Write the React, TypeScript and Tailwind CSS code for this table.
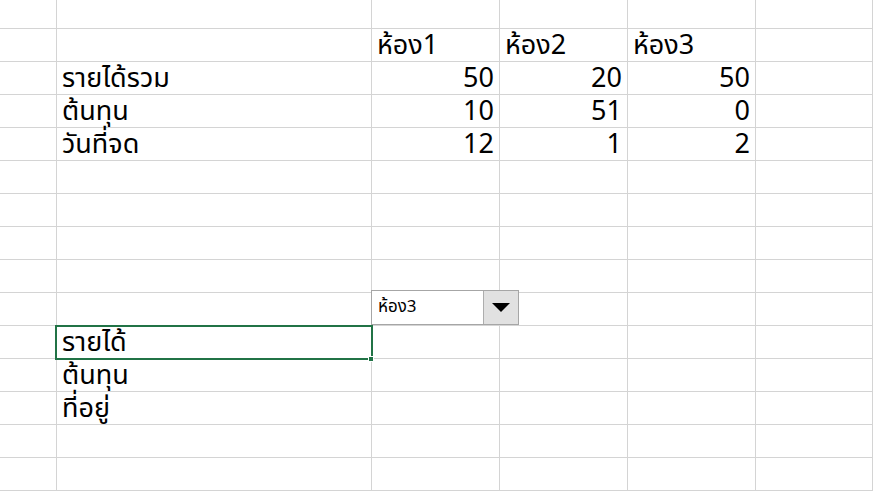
const colWidths = ["w-[57px]", "w-[315px]", "w-[128px]", "w-[128px]", "w-[128px]", "flex-1"];

type Cell = { text?: string; align?: "left" | "right" };

const rows: Cell[][] = [
  [],
  [{}, {}, { text: "ห้อง1" }, { text: "ห้อง2" }, { text: "ห้อง3" }],
  [{}, { text: "รายได้รวม" }, { text: "50", align: "right" }, { text: "20", align: "right" }, { text: "50", align: "right" }],
  [{}, { text: "ต้นทุน" }, { text: "10", align: "right" }, { text: "51", align: "right" }, { text: "0", align: "right" }],
  [{}, { text: "วันที่จด" }, { text: "12", align: "right" }, { text: "1", align: "right" }, { text: "2", align: "right" }],
  [],
  [],
  [],
  [],
  [],
  [{}, { text: "รายได้" }],
  [{}, { text: "ต้นทุน" }],
  [{}, { text: "ที่อยู่" }],
  [],
  [],
];

function Row({ cells, first }: { cells: Cell[]; first?: boolean }) {
  return (
    <div className={`flex border-b border-[#d4d4d4] ${first ? "h-[30px]" : "h-[33px]"}`}>
      {colWidths.map((w, i) => {
        const c = cells[i] || {};
        return (
          <div
            key={i}
            className={`${w} shrink-0 border-r border-[#d4d4d4] px-[5px] flex items-end text-[27px] leading-[30px] text-black whitespace-nowrap ${
              c.align === "right" ? "justify-end" : "justify-start"
            }`}
          >
            {c.text}
          </div>
        );
      })}
    </div>
  );
}

export default function App() {
  return (
    <div
      className="relative w-[873px] h-[491px] overflow-hidden bg-white"
      style={{ fontFamily: '"Noto Sans Thai", "Noto Sans", Tahoma, sans-serif' }}
    >
      <div className="-mt-[1px]">
        {rows.map((r, i) => (
          <Row key={i} cells={r} first={i === 0} />
        ))}
      </div>

      {/* dropdown form control */}
      <div className="absolute left-[371px] top-[290px] w-[148px] h-[35px] flex bg-white border border-[#a6a6a6]">
        <div className="flex-1 flex items-center pl-[6px] text-[17px] text-black">ห้อง3</div>
        <div className="w-[35px] h-full bg-[#e1e1e1] border-l border-[#adadad] flex items-center justify-center">
          <svg width="18" height="10" viewBox="0 0 18 10">
            <polygon points="0,0 18,0 9,9" fill="#000" />
          </svg>
        </div>
      </div>

      {/* selected cell */}
      <div className="absolute left-[55px] top-[325px] w-[318px] h-[35px] border-2 border-[#217346] pointer-events-none" />
      <div className="absolute left-[368px] top-[356px] w-[6px] h-[6px] bg-[#217346] border border-white" />
    </div>
  );
}
